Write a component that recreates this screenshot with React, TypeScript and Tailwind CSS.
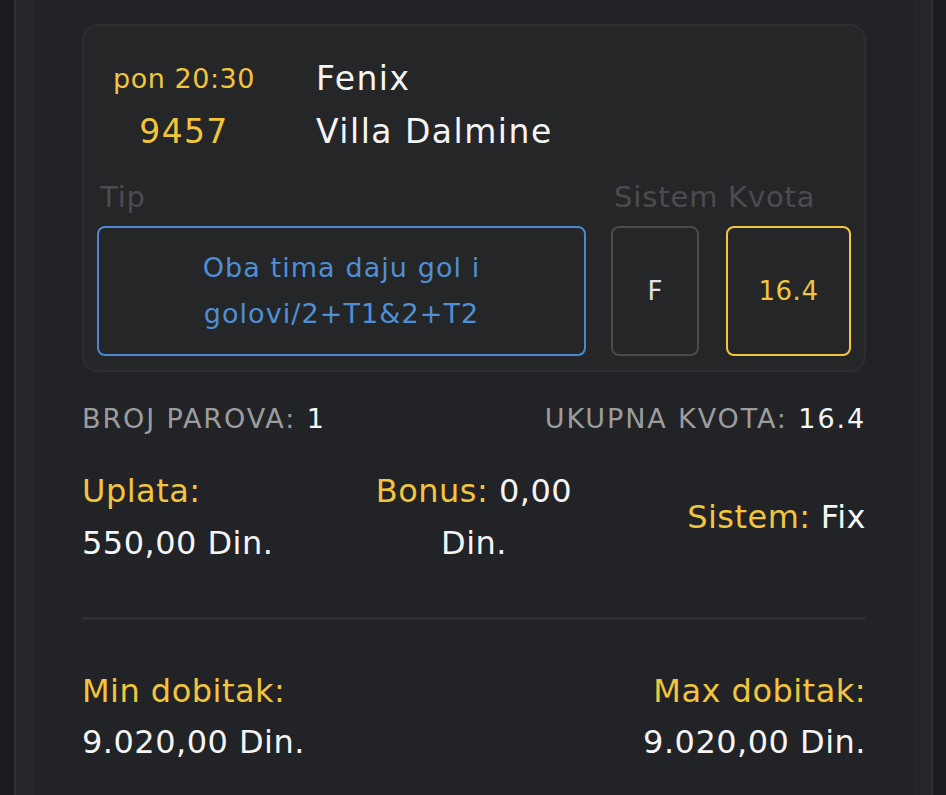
import React from 'react';

const font = { fontFamily: '"DejaVu Sans", "Open Sans", sans-serif' };

export default function App() {
  return (
    <div className="min-h-[795px] w-full bg-[#1b1c20]" style={font}>
      <div className="ml-[14px] mr-[13px] min-h-[795px] border-x-2 border-x-[#2f3033] bg-[#252629] px-[18px]">
        <div className="min-h-[795px] bg-[#222326] pl-[48px] pr-[47px] pt-[24px]">
          {/* match card */}
          <div className="rounded-[16px] border-2 border-[#2d2e31] bg-[#252628] px-[13px] pb-[14px] pt-[26px]">
            <div className="flex">
              <div className="w-[174px] text-center text-[#f2c53d]">
                <div className="text-[27px] leading-[53px] tracking-[0.02em]">pon 20:30</div>
                <div className="text-[33px] leading-[53px] tracking-[0.04em]">9457</div>
              </div>
              <div className="ml-[45px] text-[33px] leading-[53px] tracking-[0.045em] text-[#f5f5f5]">
                <div>Fenix</div>
                <div>Villa Dalmine</div>
              </div>
            </div>

            <div className="mt-[21px] flex">
              <div className="flex-1">
                <div className="pl-[3px] text-[29px] leading-[36px] tracking-[0.03em] text-[#4b4c4f]">Tip</div>
                <div className="mt-[11px] flex h-[130px] items-center justify-center rounded-[8px] border-2 border-[#4a88d0] px-4 text-center text-[27px] leading-[46px] tracking-[0.04em] text-[#4f8fd6]">
                  Oba tima daju gol i<br />golovi/2+T1&amp;2+T2
                </div>
              </div>
              <div className="ml-[25px] w-[88px]">
                <div className="whitespace-nowrap pl-[3px] text-[29px] leading-[36px] tracking-[0.03em] text-[#4b4c4f]">Sistem</div>
                <div className="mt-[11px] flex h-[130px] items-center justify-center rounded-[8px] border-2 border-[#4a4b4e] text-[26px] text-[#e2e2e2]">
                  F
                </div>
              </div>
              <div className="ml-[27px] w-[125px]">
                <div className="pl-[2px] text-[29px] leading-[36px] tracking-[0.03em] text-[#4b4c4f]">Kvota</div>
                <div className="mt-[11px] flex h-[130px] items-center justify-center rounded-[8px] border-2 border-[#f2c53d] text-[26px] tracking-[0.02em] text-[#f2c53d]">
                  16.4
                </div>
              </div>
            </div>
          </div>

          {/* totals */}
          <div className="mt-[29px] flex justify-between text-[27px] leading-[36px] tracking-[0.07em] text-[#9c9c9e]">
            <div>
              BROJ PAROVA: <span className="text-[#f5f5f5]">1</span>
            </div>
            <div>
              UKUPNA KVOTA: <span className="text-[#f5f5f5]">16.4</span>
            </div>
          </div>

          <div className="mt-[28px] grid grid-cols-3 text-[32px] leading-[52px] tracking-[0.015em]">
            <div>
              <div className="text-[#f2c53d]">Uplata:</div>
              <div className="text-[#f5f5f5]">550,00 Din.</div>
            </div>
            <div className="text-center">
              <div>
                <span className="text-[#f2c53d]">Bonus:</span> <span className="text-[#f5f5f5]">0,00</span>
              </div>
              <div className="text-[#f5f5f5]">Din.</div>
            </div>
            <div className="flex items-center justify-end">
              <span className="text-[#f2c53d]">Sistem:</span>
              <span className="ml-[10px] text-[#f5f5f5]">Fix</span>
            </div>
          </div>

          <div className="mt-[48px] h-[3px] bg-[#2e2f32]" />

          <div className="mt-[46px] flex justify-between text-[32px] leading-[51px] tracking-[0.015em]">
            <div>
              <div className="text-[#f2c53d]">Min dobitak:</div>
              <div className="text-[#f5f5f5]">9.020,00 Din.</div>
            </div>
            <div className="text-right">
              <div className="text-[#f2c53d]">Max dobitak:</div>
              <div className="text-[#f5f5f5]">9.020,00 Din.</div>
            </div>
          </div>
        </div>
      </div>
    </div>
  );
}
